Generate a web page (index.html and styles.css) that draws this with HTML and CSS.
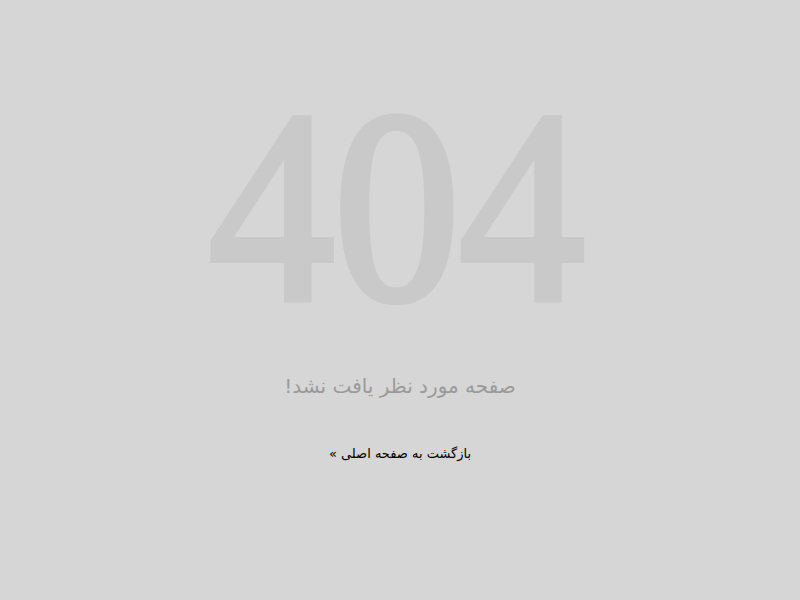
FILE: index.html
```html
<!DOCTYPE html>
<html lang="fa" dir="rtl">
<head>
<meta charset="utf-8">
<title>404</title>
<link rel="stylesheet" href="styles.css">
</head>
<body>
<main class="page">
  <div class="code">404</div>
  <h1 class="title">صفحه مورد نظر یافت نشد!</h1>
  <a class="back" href="#">بازگشت به صفحه اصلی »</a>
</main>
</body>
</html>
```
FILE: styles.css
```css
html, body {
  margin: 0;
  padding: 0;
  height: 100%;
  background: #d6d6d6;
}
.page {
  display: flex;
  flex-direction: column;
  align-items: center;
  padding-top: 62px;
  font-family: "DejaVu Sans", sans-serif;
}
.code {
  font-family: "Liberation Serif", serif;
  font-weight: normal;
  font-size: 274px;
  line-height: 290px;
  letter-spacing: -1px;
  text-indent: -9px;
  color: #c9c9c9;
  -webkit-text-stroke: 7px #c9c9c9;
  text-shadow: 0 1px 0 #dcdcdc;
  transform: scaleX(0.92);
  direction: ltr;
}
.title {
  margin: 22px 0 0;
  font-size: 20px;
  font-weight: normal;
  color: #9a9a9a;
}
.back {
  margin-top: 48px;
  font-size: 13px;
  color: #000;
  text-decoration: none;
}
```
